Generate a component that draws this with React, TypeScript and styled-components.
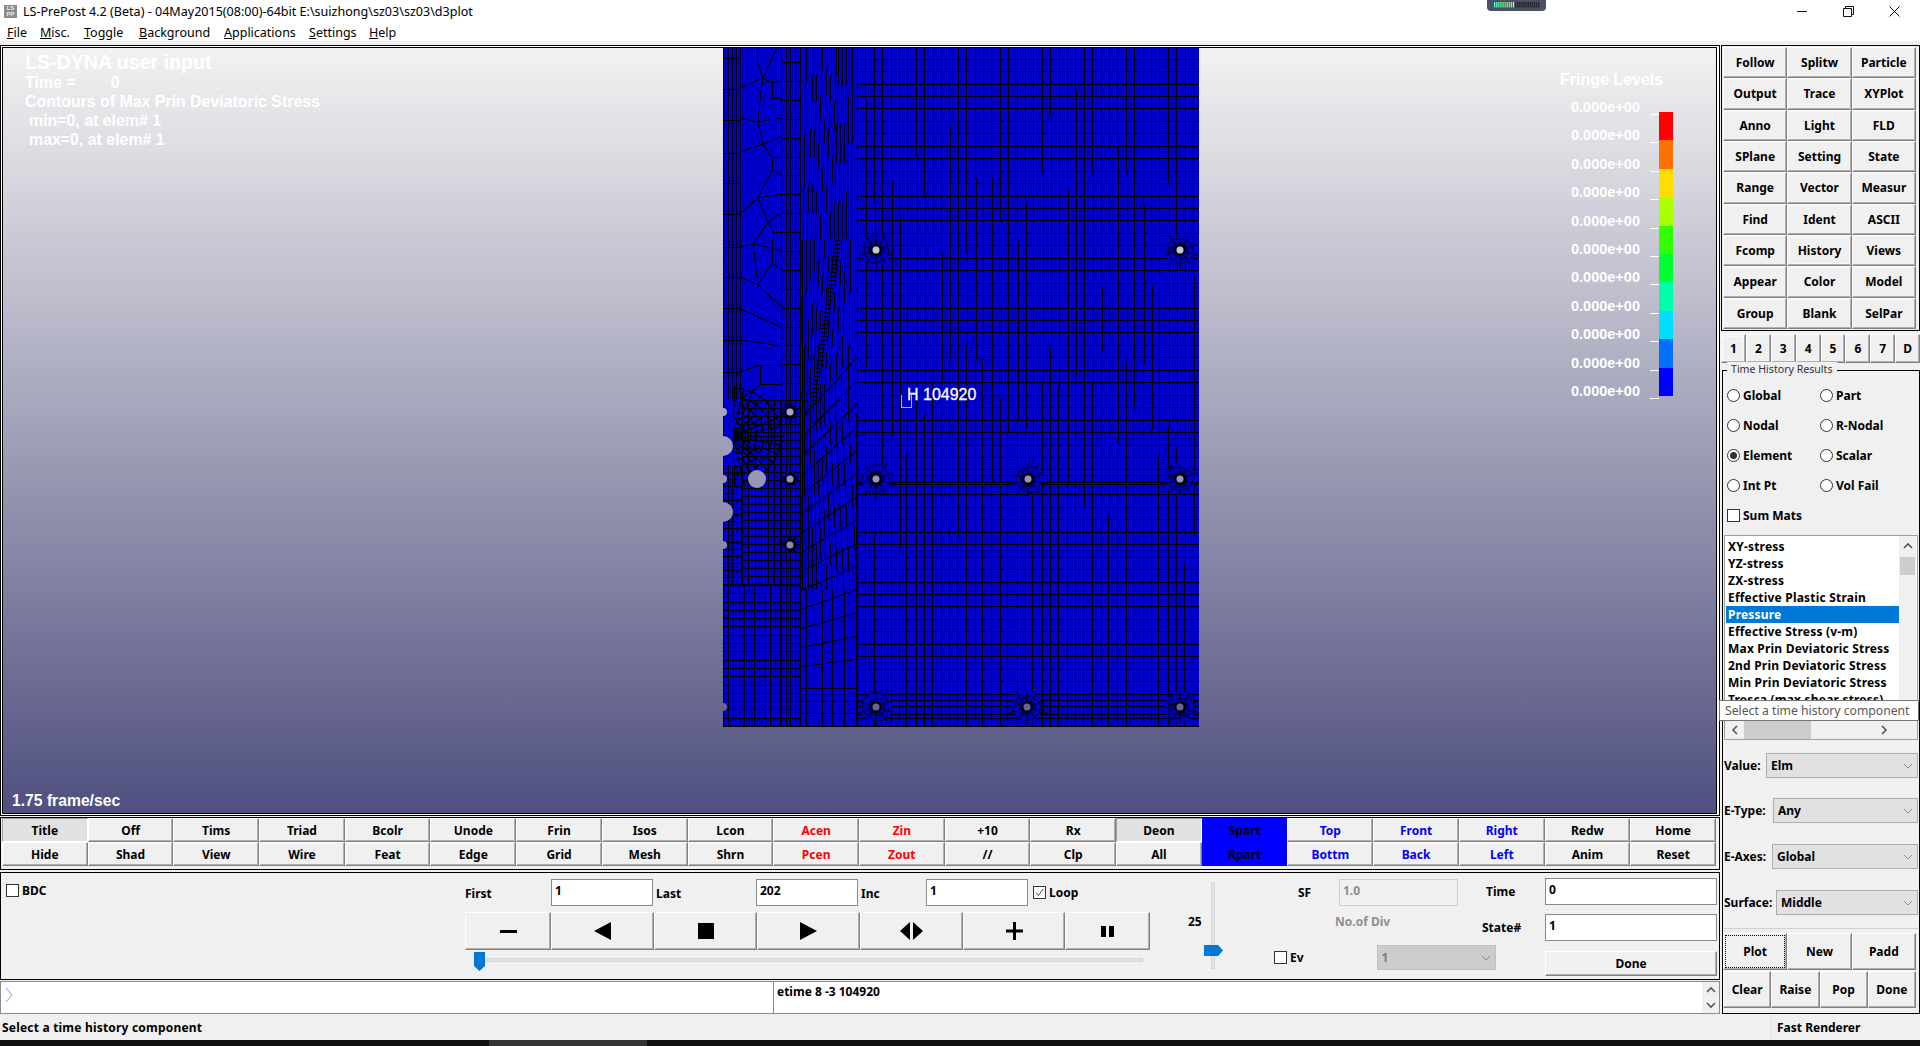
import styled, { createGlobalStyle } from "styled-components";

const GlobalStyle = createGlobalStyle`
  html, body {
    margin: 0;
    padding: 0;
    background: #f0f0f0;
  }
  * {
    box-sizing: border-box;
  }
`;

const UI_FONT = `"Noto Sans", "DejaVu Sans", sans-serif`;
const GL_FONT = `"Liberation Sans", Arial, sans-serif`;
const MESH_BLUE = "#0000c8";

// ---- mesh drawing helpers, coordinates are page pixels ----

const rnd = (i: number) => {
  const s = Math.sin(i * 12.9898) * 43758.5453;
  return s - Math.floor(s);
};

const backdrop = (y: number) => {
  const t = (y - 48) / 764;
  const mix = (a: number, b: number) => Math.round(a + (b - a) * t);
  return `rgb(${mix(242, 80)},${mix(242, 80)},${mix(242, 128)})`;
};

const hline = (x1: number, x2: number, y: number) => `M${x1} ${y}H${x2}`;
const vline = (x: number, y1: number, y2: number) => `M${x} ${y1}V${y2}`;
const poly = (pts: number[][]) =>
  "M" + pts.map((p) => `${p[0].toFixed(1)} ${p[1].toFixed(1)}`).join("L");

// traced from the upper left patch of the plate
const freeform: number[][][] = [
  [[757, 47], [758, 63], [763, 78], [772, 83], [781, 81]],
  [[777, 47], [763, 78], [761, 92], [758, 122], [763, 144], [772, 157], [781, 157]],
  [[740, 88], [763, 78]],
  [[772, 83], [772, 98], [781, 98]],
  [[740, 118], [758, 122], [781, 118]],
  [[740, 152], [763, 144], [781, 137]],
  [[772, 157], [772, 170], [781, 175]],
  [[772, 170], [758, 198], [740, 214]],
  [[758, 198], [781, 194]],
  [[758, 198], [768, 222], [781, 213]],
  [[768, 222], [774, 233], [781, 232]],
  [[774, 233], [772, 248], [781, 251]],
  [[772, 248], [773, 263], [781, 270]],
  [[773, 263], [767, 270], [758, 285], [740, 277]],
  [[758, 285], [781, 307]],
  [[740, 247], [753, 244], [772, 248]],
  [[753, 244], [758, 285]],
  [[768, 222], [753, 244]],
  [[740, 309], [781, 327]],
  [[740, 340], [781, 346]],
  [[740, 372], [760, 365], [781, 365]],
  [[760, 365], [760, 385], [781, 384]],
  [[740, 400], [760, 385]],
];

const fanKnots: number[][] = [
  [800.7, 806.7, 814, 818, 823, 828, 832, 837, 839, 843, 847, 850, 853, 857],
  [800, 803, 807, 811, 815, 820, 825, 830, 834, 838, 842, 846, 851, 857],
  [800, 802, 804, 807, 810, 813, 816, 820, 824, 829, 835, 841, 848, 857],
  [800, 803, 806, 809, 813, 817, 822, 827, 832, 838, 844, 850, 857, 857],
];
const fanYs = [48, 240, 400, 590];

function buildMesh() {
  const d: string[] = [];

  // right plate: rows 12.45 apart, columns about 8.4 apart with small jogs
  for (let y = 208 - 12.45 * 12; y < 727; y += 12.45) d.push(hline(857, 1199, Math.round(y)));
  d.push(hline(857, 1199, 475), hline(857, 1199, 484), hline(857, 1199, 700), hline(857, 1199, 714));
  for (let i = 0; i < 41; i++) {
    const x = Math.round(857 + i * 8.4);
    const jog = Math.round(90 + rnd(i + 1) * 200);
    const jog2 = Math.round(340 + rnd(i + 50) * 240);
    const offset = i % 3 === 0 ? 0 : 1;
    d.push(vline(x, 48, jog), vline(x + offset, jog, jog2), vline(x + offset - 1, jog2, 727));
  }

  // fan between the two plates
  fanKnots[0].forEach((_, i) => {
    const pts = fanYs.map((y, k) => [fanKnots[k][i], y]);
    if (i % 2 === 0 || i === 13) pts.push([fanKnots[3][i], 727]);
    d.push(poly(pts));
  });
  for (let y = 240; y < 405; y += 4) {
    const cx = 838 - (y - 240) * 0.15;
    d.push(hline(Math.round(cx - 3), Math.round(cx + 3), y));
  }
  for (let yl = 420; yl <= 680; yl += 19) {
    d.push(poly([[800, yl], [857, yl - (680 - yl) * 0.22 - 5]]));
  }
  for (let yr = 688; yr < 727; yr += 12.5) d.push(hline(800, 857, Math.round(yr)));

  // left strips
  [723, 728, 732, 736, 740].forEach((x) => d.push(vline(x, 48, 400)));
  [781, 786, 790, 795, 800].forEach((x) => d.push(vline(x, 48, 727)));
  [58, 89, 120, 153, 183, 214, 247, 277, 308, 340, 372].forEach((y) => d.push(hline(723, 740, y)));
  for (let y = 62; y < 400; y += 18.9) d.push(hline(781, 800, Math.round(y)));
  freeform.forEach((line) => d.push(poly(line)));

  // lower left block
  for (let x = 723; x < 781; x += 5.2) d.push(vline(Math.round(x), 585, 727));
  for (let y = 585; y < 727; y += 8.3) d.push(hline(723, 800, Math.round(y)));
  for (let x = 742; x < 781; x += 6.4) d.push(vline(Math.round(x), 400, 585));
  for (let y = 400; y < 585; y += 8) d.push(hline(742, 800, Math.round(y)));
  for (let x = 723; x < 742; x += 4.5) d.push(vline(Math.round(x), 465, 585));
  for (let y = 465; y < 585; y += 7) d.push(hline(723, 742, Math.round(y)));

  // spider web around the upper edge cut-out
  [8, 13, 18, 24, 31, 39, 48].forEach((r) => {
    const pts: number[][] = [];
    for (let a = -90; a <= 90; a += 12) {
      const rad = (a * Math.PI) / 180;
      pts.push([733 + r * Math.cos(rad), 436 + r * Math.sin(rad)]);
    }
    d.push(poly(pts));
  });
  for (let a = -88; a <= 88; a += 11) {
    const rad = (a * Math.PI) / 180;
    d.push(poly([[733, 436], [733 + 50 * Math.cos(rad), 436 + 50 * Math.sin(rad)]]));
  }
  d.push(hline(723, 1199, 726), vline(723, 48, 727));
  return d.join("");
}

const meshPath = buildMesh();

const bolts = [
  [876, 250], [1180, 250], [876, 479], [1028, 479], [1180, 479],
  [876, 707], [1027, 707], [1180, 707], [790, 412], [790, 479], [790, 545],
];
const cuts = [
  { x: 723, y: 446, r: 10 },
  { x: 723, y: 512, r: 10 },
  { x: 723, y: 412, r: 4 },
  { x: 723, y: 479, r: 4 },
  { x: 723, y: 545, r: 4 },
  { x: 723, y: 707, r: 4 },
  { x: 757, y: 479, r: 9 },
];

function Rosette({ x, y, seed }: { x: number; y: number; seed: number }) {
  const small = x < 800;
  const reach = small ? 9 : 18;
  const ring = (r: number, s: number) =>
    poly(
      Array.from({ length: 11 }, (_, i) => {
        const a = (i % 10) * (Math.PI / 5) + 0.3;
        const rr = r * (0.82 + rnd(s + (i % 10)) * 0.36);
        return [x + rr * Math.cos(a), y + rr * Math.sin(a)];
      })
    );
  const spokes = Array.from({ length: 10 }, (_, i) => {
    const a = i * (Math.PI / 5) + 0.3;
    const len = reach * (0.8 + rnd(seed + i) * 0.4);
    return `M${x} ${y}L${(x + len * Math.cos(a)).toFixed(1)} ${(y + len * Math.sin(a)).toFixed(1)}`;
  }).join("");
  return (
    <g fill="none" stroke="#000">
      <circle cx={x} cy={y} r={reach * 0.85} fill={MESH_BLUE} stroke="none" />
      <path d={spokes} strokeWidth={0.9} />
      <path d={ring(reach * 0.75, seed)} strokeWidth={0.8} />
      {!small && <path d={ring(reach * 0.47, seed + 20)} strokeWidth={0.8} />}
      <circle cx={x} cy={y} r={5} strokeWidth={2.4} />
      <circle cx={x} cy={y} r={3.5} fill={backdrop(y)} stroke="none" />
    </g>
  );
}

function Mesh() {
  return (
    <MeshSvg viewBox="723 48 476 679" width={476} height={679}>
      <rect x={723} y={48} width={476} height={679} fill={MESH_BLUE} />
      <path d={meshPath} fill="none" stroke="#000" strokeWidth={1} shapeRendering="crispEdges" />
      {bolts.map((b, i) => (
        <Rosette key={i} x={b[0]} y={b[1]} seed={i * 17 + 3} />
      ))}
      {cuts.map((c) => (
        <circle key={`${c.x}-${c.y}`} cx={c.x} cy={c.y} r={c.r} fill={backdrop(c.y)} />
      ))}
    </MeshSvg>
  );
}

// ---- page frame ----

const Page = styled.div`
  width: 1920px;
  height: 1046px;
  overflow: hidden;
  display: flex;
  flex-direction: column;
  background: #f0f0f0;
  font-family: ${UI_FONT};
  color: #000;
`;

const TitleBar = styled.div`
  height: 22px;
  background: #fff;
  display: flex;
  align-items: center;
  position: relative;
  font-size: 12.55px;
  padding-left: 4px;
`;

const AppIcon = styled.span`
  width: 13px;
  height: 13px;
  margin-right: 6px;
  background: #8b8b8b;
  color: #eee;
  font: bold 6px/6px ${GL_FONT};
  display: flex;
  flex-wrap: wrap;
  align-items: center;
  justify-content: center;
  text-align: center;
`;

const TitleText = styled.span`
  flex: 1;
  white-space: nowrap;
`;

const MonitorTab = styled.svg`
  position: absolute;
  left: 1487px;
  top: 0;
`;

const WindowControls = styled.div`
  display: flex;
  align-items: center;
  gap: 35px;
  padding-right: 20px;
`;

const MenuBar = styled.div`
  height: 19px;
  background: #fff;
  display: flex;
  align-items: center;
  font-size: 12.5px;
  padding: 2px 0 0 7px;
`;

const MenuItem = styled.span<{ $width: number }>`
  width: ${(p) => p.$width}px;
  white-space: nowrap;
  &::first-letter {
    text-decoration: underline;
  }
`;

const Body = styled.div`
  height: 974px;
  display: flex;
  padding-top: 4px;
`;

const LeftColumn = styled.div`
  width: 1720px;
  display: flex;
  flex-direction: column;
`;

const ViewFrame = styled.div`
  height: 771px;
  border: 1px solid #000;
  padding: 1px 2px 1px 1px;
  background: #fff;
`;

const Viewport = styled.div`
  position: relative;
  height: 100%;
  border: 1px solid #000;
  background: linear-gradient(#f2f2f2, #505080);
  overflow: hidden;
  font-family: ${GL_FONT};
  font-weight: 700;
  color: #fff;
`;

const MeshSvg = styled.svg`
  position: absolute;
  left: 720px;
  top: 0;
`;

const InfoBlock = styled.div`
  position: absolute;
  left: 22px;
  top: 3px;
  font-size: 15.9px;
  line-height: 19px;
  white-space: pre;
`;

const InfoTitle = styled.div`
  font-size: 19.6px;
  line-height: 22px;
`;

const Indented = styled.div`
  padding-left: 4px;
`;

const Legend = styled.div`
  position: absolute;
  left: 1557px;
  top: 22px;
`;

const LegendTitle = styled.div`
  font-size: 16px;
  line-height: 20px;
`;

const LegendBody = styled.div`
  display: flex;
  margin-top: 22px;
  margin-left: 11px;
`;

const LegendLabels = styled.div`
  width: 88px;
  display: flex;
  flex-direction: column;
  margin-top: -13px;
`;

const LegendRow = styled.div`
  height: 28.4px;
  display: flex;
  font-size: 14.5px;
  line-height: 17px;
  position: relative;
  &::after {
    content: "";
    position: absolute;
    left: 79px;
    top: 15px;
    width: 9px;
    height: 1px;
    background: #fff;
  }
`;

const ColorBar = styled.div`
  width: 14px;
  display: flex;
  flex-direction: column;
`;

const ColorCell = styled.div<{ $color: string }>`
  height: 28.4px;
  background: ${(p) => p.$color};
`;

const FrameRate = styled.div`
  position: absolute;
  left: 9px;
  bottom: 3px;
  font-size: 15.7px;
  line-height: 18px;
`;

const NodeLabel = styled.div`
  position: absolute;
  left: 904px;
  top: 338px;
  font-size: 16px;
  line-height: 18px;
  font-weight: 400;
  -webkit-text-stroke: 0.3px #fff;
  white-space: nowrap;
  &::before {
    content: "";
    position: absolute;
    left: -6px;
    top: 9px;
    width: 9px;
    height: 12px;
    border: 1px solid #2ee;
    border-top: none;
  }
`;

// ---- buttons ----

const Btn = styled.button<{ $color?: string; $bg?: string; $pressed?: boolean; $focus?: string }>`
  min-width: 0;
  padding: 0;
  margin: 0;
  font-family: ${UI_FONT};
  font-size: 12px;
  font-weight: 700;
  color: ${(p) => p.$color || "#000"};
  background: ${(p) => p.$bg || (p.$pressed ? "#e1e1e1" : "#f0f0f0")};
  border: 1px solid;
  border-color: ${(p) => (p.$bg ? p.$bg : p.$pressed ? "#a0a0a0 #fff #fff #a0a0a0" : "#fff #808080 #808080 #fff")};
  box-shadow: ${(p) => (p.$bg || p.$pressed ? "none" : "inset -1px -1px 0 #b0b0b0")};
  outline: ${(p) => (p.$focus ? `1px dotted ${p.$focus}` : "none")};
  outline-offset: -3px;
`;

const StripFrame = styled.div`
  height: 53px;
  margin-top: 1px;
  border: 1px solid #000;
  padding: 0 3px 3px 1px;
  display: grid;
  grid-template-columns: repeat(20, 1fr);
  grid-template-rows: repeat(2, 1fr);
  width: 1720px;
`;

const Panel = styled.div`
  height: 108px;
  margin-top: 2px;
  border: 1px solid #000;
  display: flex;
  font-size: 12px;
  font-weight: 700;
`;

const BdcColumn = styled.div`
  width: 464px;
  padding: 9px 0 0 5px;
`;

const CheckLabel = styled.label`
  display: flex;
  align-items: center;
  gap: 3px;
  white-space: nowrap;
`;

const LoopCheck = styled(CheckLabel)`
  margin-left: 5px;
`;

const CheckBox = styled.span`
  width: 13px;
  height: 13px;
  background: #fff;
  border: 1px solid #333;
  display: inline-flex;
  align-items: center;
  justify-content: center;
  flex: none;
`;

const PlayerColumn = styled.div`
  width: 686px;
  display: flex;
  flex-direction: column;
  padding-top: 6px;
`;

const FieldRow = styled.div`
  height: 27px;
  display: flex;
  align-items: center;
`;

const FieldLabel = styled.span<{ $width: number }>`
  width: ${(p) => p.$width}px;
  padding-top: 1px;
`;

const TextBox = styled.div<{ $width?: number; $disabled?: boolean }>`
  width: ${(p) => (p.$width ? `${p.$width}px` : "100%")};
  height: 27px;
  background: ${(p) => (p.$disabled ? "#f0f0f0" : "#fff")};
  border: 1px solid ${(p) => (p.$disabled ? "#d0d0d0" : "#8a8a8a")};
  padding: 2px 3px 0;
  font-size: 12px;
  line-height: 17px;
  font-weight: 700;
  color: ${(p) => (p.$disabled ? "#8d8d8d" : "#000")};
`;

const TransportRow = styled.div`
  display: flex;
  height: 38px;
  margin-top: 6px;
`;

const TransportBtn = styled(Btn)<{ $width: number }>`
  width: ${(p) => p.$width}px;
  display: flex;
  align-items: center;
  justify-content: center;
`;

const HSlider = styled.div`
  position: relative;
  height: 4px;
  margin: 8px 8px 0 19px;
  background: #e0e3e3;
  border: 1px solid #d6d6d6;
`;

const HThumb = styled.svg`
  position: absolute;
  left: -11px;
  top: -7px;
`;

const SpeedColumn = styled.div`
  width: 122px;
  display: flex;
  padding: 6px 0 0 37px;
`;

const SpeedValue = styled.span`
  margin-top: 34px;
  width: 23px;
`;

const VSlider = styled.div`
  position: relative;
  width: 4px;
  height: 87px;
  margin-top: 3px;
  background: #e4e4e4;
  border: 1px solid #d6d6d6;
`;

const VThumb = styled.svg`
  position: absolute;
  left: -8px;
  top: 62px;
`;

const SfColumn = styled.div`
  width: 209px;
  padding-top: 6px;
  display: flex;
  flex-direction: column;
`;

const SfRow = styled.div`
  display: flex;
  align-items: center;
  height: 27px;
  padding-left: 25px;
`;

const SfLabel = styled.span`
  width: 41px;
`;

const GreyText = styled.div`
  color: #8e8e8e;
  padding-left: 62px;
  margin-top: 8px;
  line-height: 16px;
`;

const SfBottomRow = styled.div`
  display: flex;
  align-items: center;
  margin-top: 15px;
  padding-left: 1px;
`;

const EvSpacer = styled.div`
  flex: none;
  width: 73px;
`;

const TimeColumn = styled.div`
  flex: 1;
  padding: 5px 2px 0 0;
  display: grid;
  grid-template-columns: 63px 1fr;
  grid-auto-rows: 27px;
  row-gap: 9px;
  align-items: center;
`;

const TimeLabel = styled.span<{ $indent: number }>`
  padding-left: ${(p) => p.$indent}px;
`;

const DoneBtn = styled(Btn)`
  height: 25px;
`;

const DropBox = styled.div<{ $disabled?: boolean; $width?: number; $height: number }>`
  width: ${(p) => (p.$width ? `${p.$width}px` : "auto")};
  flex: ${(p) => (p.$width ? "none" : 1)};
  height: ${(p) => p.$height}px;
  background: ${(p) => (p.$disabled ? "#cccccc" : "#e1e1e1")};
  border: 1px solid ${(p) => (p.$disabled ? "#c0c0c0" : "#adadad")};
  color: ${(p) => (p.$disabled ? "#7d7d7d" : "#000")};
  display: flex;
  align-items: center;
  justify-content: space-between;
  padding: 0 4px;
  font-weight: 700;
  font-size: 12px;
`;

const Command = styled.div`
  height: 33px;
  margin-top: 1px;
  background: #fff;
  border: 1px solid #8a8a8a;
  display: flex;
  font-size: 12px;
  font-weight: 700;
`;

const PromptCell = styled.div`
  width: 773px;
  border-right: 1px solid #8a8a8a;
  padding: 5px 0 0 4px;
`;

const HistoryCell = styled.div`
  flex: 1;
  padding: 1px 0 0 3px;
`;

const CommandScroll = styled.div`
  width: 17px;
  background: #f0f0f0;
  display: flex;
  flex-direction: column;
  align-items: center;
  justify-content: space-around;
`;

const Status = styled.div`
  height: 25px;
  display: flex;
  align-items: center;
  font-size: 12px;
  font-weight: 700;
  letter-spacing: 0.2px;
  padding-left: 2px;
`;

const StatusMessage = styled.span`
  width: 1769px;
`;

const StatusRight = styled.span`
  padding-left: 5px;
  border-left: 1px solid #e4e4e4;
  height: 100%;
  display: flex;
  align-items: center;
  letter-spacing: 0;
`;

const DarkStrip = styled.div`
  flex: 1;
  background: #120f10;
  display: flex;
  padding-left: 489px;
`;

const DarkSegment = styled.div`
  width: 158px;
  background: #353233;
`;

// ---- right side ----

const RightPanel = styled.div`
  width: 199px;
  margin-left: 1px;
  display: flex;
  flex-direction: column;
  font-size: 12px;
  font-weight: 700;
`;

const CommandGrid = styled.div`
  height: 286px;
  border: 1px solid #000;
  padding: 1px 3px 1px 1px;
  display: grid;
  grid-template-columns: repeat(3, 1fr);
  grid-template-rows: repeat(9, 1fr);
`;

const Tabs = styled.div`
  display: grid;
  grid-template-columns: repeat(8, 1fr);
  height: 29px;
  margin-top: 3px;
`;

const GroupBox = styled.div`
  position: relative;
  height: 644px;
  margin-top: 7px;
  margin-left: 1px;
  border: 1px solid #000;
  display: flex;
  flex-direction: column;
`;

const GroupTitle = styled.span`
  position: absolute;
  left: 4px;
  top: -9px;
  padding: 0 4px;
  background: #f0f0f0;
  font-weight: 400;
  font-size: 10.6px;
  line-height: 15px;
  color: #333;
`;

const RadioGrid = styled.div`
  display: grid;
  grid-template-columns: 93px 1fr;
  grid-auto-rows: 30px;
  padding: 9px 0 0 4px;
  align-items: center;
`;

const RadioLabel = styled.label`
  display: flex;
  align-items: center;
  gap: 3px;
`;

const Radio = styled.span<{ $on?: boolean }>`
  width: 13px;
  height: 13px;
  border-radius: 50%;
  background: #fff;
  border: 1px solid #333;
  display: inline-flex;
  align-items: center;
  justify-content: center;
  flex: none;
  &::after {
    content: "";
    width: 7px;
    height: 7px;
    border-radius: 50%;
    background: ${(p) => (p.$on ? "#333" : "transparent")};
  }
`;

const SumRow = styled.div`
  grid-column: 1 / 3;
`;

const ListWrap = styled.div`
  position: relative;
  margin: 5px 1px 0 1px;
  height: 205px;
  background: #fff;
  border: 1px solid #a0a0a0;
  display: flex;
  flex-direction: column;
`;

const ListMain = styled.div`
  flex: 1;
  display: flex;
  overflow: hidden;
`;

const ListItems = styled.div`
  flex: 1;
  padding: 2px 0 0 1px;
  overflow: hidden;
`;

const ListItem = styled.div<{ $selected?: boolean }>`
  height: 17px;
  line-height: 17px;
  padding-left: 2px;
  letter-spacing: 0.2px;
  white-space: nowrap;
  background: ${(p) => (p.$selected ? "#0078d7" : "transparent")};
  color: ${(p) => (p.$selected ? "#fff" : "#000")};
`;

const VScroll = styled.div`
  width: 17px;
  margin-right: 1px;
  background: #f0f0f0;
  display: flex;
  flex-direction: column;
  align-items: center;
  padding-top: 5px;
`;

const VScrollThumb = styled.div`
  width: 15px;
  height: 18px;
  margin-top: 6px;
  background: #cdcdcd;
`;

const HScroll = styled.div`
  height: 18px;
  background: #f0f0f0;
  display: flex;
  align-items: center;
`;

const HScrollThumb = styled.div`
  width: 67px;
  height: 100%;
  background: #cdcdcd;
  margin: 0 68px 0 4px;
`;

const ArrowSlot = styled.span<{ $left: number }>`
  margin-left: ${(p) => p.$left}px;
  display: flex;
`;

const ToolTip = styled.div`
  position: absolute;
  left: -6px;
  top: 164px;
  width: 200px;
  height: 21px;
  background: #fff;
  border: 1px solid #767676;
  padding-left: 5px;
  font-weight: 400;
  font-size: 12.2px;
  line-height: 19px;
  color: #575757;
  white-space: nowrap;
  z-index: 2;
`;

const SelectRow = styled.div<{ $labelWidth: number; $top: number }>`
  display: grid;
  grid-template-columns: ${(p) => p.$labelWidth}px 1fr;
  align-items: center;
  margin: ${(p) => p.$top}px 1px 0 0;
  padding-left: 1px;
  white-space: nowrap;
`;

const Separator = styled.div`
  height: 1px;
  margin: 13px 1px 0 1px;
  background: #cfcfcf;
`;

const ActionRow = styled.div<{ $cols: number; $top: number }>`
  display: grid;
  grid-template-columns: repeat(${(p) => p.$cols}, 1fr);
  height: 37px;
  margin: ${(p) => p.$top}px 3px 0 0;
`;

const ROW_ONE = ["Title", "Off", "Tims", "Triad", "Bcolr", "Unode", "Frin", "Isos", "Lcon", "Acen", "Zin", "+10", "Rx", "Deon", "Spart", "Top", "Front", "Right", "Redw", "Home"];
const ROW_TWO = ["Hide", "Shad", "View", "Wire", "Feat", "Edge", "Grid", "Mesh", "Shrn", "Pcen", "Zout", "//", "Clp", "All", "Rpart", "Bottm", "Back", "Left", "Anim", "Reset"];
const RED = ["Acen", "Zin", "Pcen", "Zout"];
const BLUE = ["Top", "Front", "Right", "Bottm", "Back", "Left"];

const COMMANDS = [
  "Follow", "Splitw", "Particle", "Output", "Trace", "XYPlot", "Anno", "Light", "FLD",
  "SPlane", "Setting", "State", "Range", "Vector", "Measur", "Find", "Ident", "ASCII",
  "Fcomp", "History", "Views", "Appear", "Color", "Model", "Group", "Blank", "SelPar",
];

const RADIOS = [
  ["Global", "Part"],
  ["Nodal", "R-Nodal"],
  ["Element", "Scalar"],
  ["Int Pt", "Vol Fail"],
];

const RESULTS = [
  "XY-stress", "YZ-stress", "ZX-stress", "Effective Plastic Strain", "Pressure",
  "Effective Stress (v-m)", "Max Prin Deviatoric Stress", "2nd Prin Deviatoric Stress",
  "Min Prin Deviatoric Stress", "Tresca (max shear stress)",
];

const FRINGE = ["#ff0000", "#ff7000", "#ffdd00", "#aaff00", "#33ff00", "#00ff33", "#00ffaa", "#00ddff", "#0070ff", "#0000ff"];

const SELECTS = [
  { label: "Value:", value: "Elm", width: 42, top: 13 },
  { label: "E-Type:", value: "Any", width: 49, top: 20 },
  { label: "E-Axes:", value: "Global", width: 48, top: 21 },
  { label: "Surface:", value: "Middle", width: 52, top: 21 },
];

function Chevron({ dir, color = "#555" }: { dir: "up" | "down" | "left" | "right"; color?: string }) {
  const pts = {
    up: "1,7 5,3 9,7",
    down: "1,3 5,7 9,3",
    left: "7,1 3,5 7,9",
    right: "3,1 7,5 3,9",
  }[dir];
  return (
    <svg width="10" height="10" viewBox="0 0 10 10">
      <polyline points={pts} fill="none" stroke={color} strokeWidth={dir === "down" && color === "#8c8c8c" ? 1 : 1.6} />
    </svg>
  );
}

function stripBtn(label: string) {
  const color = RED.includes(label) ? "#ff0000" : BLUE.includes(label) ? "#0000ff" : undefined;
  const bg = label === "Spart" || label === "Rpart" ? "#0000ff" : undefined;
  const pressed = label === "Title" || label === "Deon";
  return (
    <Btn key={label} $color={color} $bg={bg} $pressed={pressed}>
      {label}
    </Btn>
  );
}

export default function App() {
  return (
    <Page>
      <GlobalStyle />
      <TitleBar>
        <AppIcon>LS PP</AppIcon>
        <TitleText>LS-PrePost 4.2 (Beta) - 04May2015(08:00)-64bit E:\suizhong\sz03\sz03\d3plot</TitleText>
        <MonitorTab width="59" height="11" viewBox="0 0 59 11">
          <path d="M0 0H59V7Q59 11 55 11H4Q0 11 0 7Z" fill="#4b5062" />
          {Array.from({ length: 22 }, (_, i) => (
            <rect
              key={i}
              x={7 + i * 2.1}
              y={2}
              width={1.3}
              height={5.5}
              fill={i < 10 ? `hsl(${170 - i * 10},85%,65%)` : "#23262e"}
            />
          ))}
        </MonitorTab>
        <WindowControls>
          <svg width="11" height="11" viewBox="0 0 11 11">
            <path d="M0 5.5H10" stroke="#111" fill="none" />
          </svg>
          <svg width="11" height="11" viewBox="0 0 11 11">
            <path d="M.5 2.5H8.5V10.5H.5ZM2.5 2.5V.5H10.5V8.5H8.5" stroke="#111" fill="none" />
          </svg>
          <svg width="11" height="11" viewBox="0 0 11 11">
            <path d="M.5 .5L10.5 10.5M10.5 .5L.5 10.5" stroke="#111" fill="none" />
          </svg>
        </WindowControls>
      </TitleBar>
      <MenuBar>
        <MenuItem $width={33}>File</MenuItem>
        <MenuItem $width={44}>Misc.</MenuItem>
        <MenuItem $width={55}>Toggle</MenuItem>
        <MenuItem $width={85}>Background</MenuItem>
        <MenuItem $width={85}>Applications</MenuItem>
        <MenuItem $width={60}>Settings</MenuItem>
        <MenuItem $width={40}>Help</MenuItem>
      </MenuBar>
      <Body>
        <LeftColumn>
          <ViewFrame>
            <Viewport>
              <Mesh />
              <InfoBlock>
                <InfoTitle>LS-DYNA user input</InfoTitle>
                <div>{"Time =        0"}</div>
                <div>Contours of Max Prin Deviatoric Stress</div>
                <Indented>min=0, at elem# 1</Indented>
                <Indented>max=0, at elem# 1</Indented>
              </InfoBlock>
              <Legend>
                <LegendTitle>Fringe Levels</LegendTitle>
                <LegendBody>
                  <LegendLabels>
                    {Array.from({ length: 11 }, (_, i) => (
                      <LegendRow key={i}>0.000e+00</LegendRow>
                    ))}
                  </LegendLabels>
                  <ColorBar>
                    {FRINGE.map((c) => (
                      <ColorCell key={c} $color={c} />
                    ))}
                  </ColorBar>
                </LegendBody>
              </Legend>
              <NodeLabel>H 104920</NodeLabel>
              <FrameRate>1.75 frame/sec</FrameRate>
            </Viewport>
          </ViewFrame>
          <StripFrame>
            {ROW_ONE.map(stripBtn)}
            {ROW_TWO.map(stripBtn)}
          </StripFrame>
          <Panel>
            <BdcColumn>
              <CheckLabel>
                <CheckBox />
                BDC
              </CheckLabel>
            </BdcColumn>
            <PlayerColumn>
              <FieldRow>
                <FieldLabel $width={86}>First</FieldLabel>
                <TextBox $width={102}>1</TextBox>
                <FieldLabel $width={103}>&nbsp;Last</FieldLabel>
                <TextBox $width={102}>202</TextBox>
                <FieldLabel $width={68}>&nbsp;Inc</FieldLabel>
                <TextBox $width={102}>1</TextBox>
                <LoopCheck>
                  <CheckBox>
                    <svg width="9" height="9" viewBox="0 0 9 9">
                      <path d="M1 4.5L3.5 7.5L8 1" fill="none" stroke="#444" />
                    </svg>
                  </CheckBox>
                  Loop
                </LoopCheck>
              </FieldRow>
              <TransportRow>
                <TransportBtn $width={86}>
                  <svg width="17" height="3">
                    <rect width="17" height="3" />
                  </svg>
                </TransportBtn>
                <TransportBtn $width={103}>
                  <svg width="17" height="18" viewBox="0 0 17 18">
                    <path d="M0 9L17 0V18Z" />
                  </svg>
                </TransportBtn>
                <TransportBtn $width={103}>
                  <svg width="16" height="16">
                    <rect width="16" height="16" />
                  </svg>
                </TransportBtn>
                <TransportBtn $width={103}>
                  <svg width="17" height="18" viewBox="0 0 17 18">
                    <path d="M17 9L0 0V18Z" />
                  </svg>
                </TransportBtn>
                <TransportBtn $width={103}>
                  <svg width="23" height="18" viewBox="0 0 23 18">
                    <path d="M0 9L10 0V18ZM23 9L13 0V18Z" />
                  </svg>
                </TransportBtn>
                <TransportBtn $width={102}>
                  <svg width="17" height="18" viewBox="0 0 17 18">
                    <path d="M7 0H10V7.5H17V10.5H10V18H7V10.5H0V7.5H7Z" />
                  </svg>
                </TransportBtn>
                <TransportBtn $width={85}>
                  <svg width="13" height="11" viewBox="0 0 13 11">
                    <path d="M0 0H5V11H0ZM8 0H13V11H8Z" />
                  </svg>
                </TransportBtn>
              </TransportRow>
              <HSlider>
                <HThumb width="11" height="19" viewBox="0 0 11 19">
                  <path d="M0 0H11V14L5.5 19L0 14Z" fill="#0078d7" />
                </HThumb>
              </HSlider>
            </PlayerColumn>
            <SpeedColumn>
              <SpeedValue>25</SpeedValue>
              <VSlider>
                <VThumb width="19" height="11" viewBox="0 0 19 11">
                  <path d="M0 0H14L19 5.5L14 11H0Z" fill="#0078d7" />
                </VThumb>
              </VSlider>
            </SpeedColumn>
            <SfColumn>
              <SfRow>
                <SfLabel>SF</SfLabel>
                <TextBox $width={119} $disabled>
                  1.0
                </TextBox>
              </SfRow>
              <GreyText>No.of Div</GreyText>
              <SfBottomRow>
                <CheckLabel>
                  <CheckBox />
                  Ev
                </CheckLabel>
                <EvSpacer />
                <DropBox $disabled $width={119} $height={25}>
                  1
                  <Chevron dir="down" color="#8c8c8c" />
                </DropBox>
              </SfBottomRow>
            </SfColumn>
            <TimeColumn>
              <TimeLabel $indent={4}>Time</TimeLabel>
              <TextBox>0</TextBox>
              <TimeLabel $indent={0}>State#</TimeLabel>
              <TextBox>1</TextBox>
              <span />
              <DoneBtn>Done</DoneBtn>
            </TimeColumn>
          </Panel>
          <Command>
            <PromptCell>
              <svg width="8" height="16" viewBox="0 0 8 16">
                <polyline points="1,1 7,8 1,15" fill="none" stroke="#8a8aff" />
              </svg>
            </PromptCell>
            <HistoryCell>etime 8 -3 104920</HistoryCell>
            <CommandScroll>
              <Chevron dir="up" />
              <Chevron dir="down" />
            </CommandScroll>
          </Command>
        </LeftColumn>
        <RightPanel>
          <CommandGrid>
            {COMMANDS.map((c) => (
              <Btn key={c} $focus={c === "History" ? "#fff" : undefined}>
                {c}
              </Btn>
            ))}
          </CommandGrid>
          <Tabs>
            {["1", "2", "3", "4", "5", "6", "7", "D"].map((t) => (
              <Btn key={t} $focus={t === "1" ? "#fff" : undefined}>
                {t}
              </Btn>
            ))}
          </Tabs>
          <GroupBox>
            <GroupTitle>Time History Results</GroupTitle>
            <RadioGrid>
              {RADIOS.flat().map((r) => (
                <RadioLabel key={r}>
                  <Radio $on={r === "Element"} />
                  {r}
                </RadioLabel>
              ))}
              <SumRow>
                <CheckLabel>
                  <CheckBox />
                  Sum Mats
                </CheckLabel>
              </SumRow>
            </RadioGrid>
            <ListWrap>
              <ListMain>
                <ListItems>
                  {RESULTS.map((r) => (
                    <ListItem key={r} $selected={r === "Pressure"}>
                      {r}
                    </ListItem>
                  ))}
                </ListItems>
                <VScroll>
                  <Chevron dir="up" />
                  <VScrollThumb />
                </VScroll>
              </ListMain>
              <HScroll>
                <ArrowSlot $left={5}>
                  <Chevron dir="left" />
                </ArrowSlot>
                <HScrollThumb />
                <ArrowSlot $left={0}>
                  <Chevron dir="right" />
                </ArrowSlot>
              </HScroll>
              <ToolTip>Select a time history component</ToolTip>
            </ListWrap>
            {SELECTS.map((s) => (
              <SelectRow key={s.label} $labelWidth={s.width} $top={s.top}>
                {s.label}
                <DropBox $height={25}>
                  {s.value}
                  <Chevron dir="down" color="#8c8c8c" />
                </DropBox>
              </SelectRow>
            ))}
            <Separator />
            <ActionRow $cols={3} $top={4}>
              <Btn $focus="#000">Plot</Btn>
              <Btn>New</Btn>
              <Btn>Padd</Btn>
            </ActionRow>
            <ActionRow $cols={4} $top={1}>
              <Btn>Clear</Btn>
              <Btn>Raise</Btn>
              <Btn>Pop</Btn>
              <Btn>Done</Btn>
            </ActionRow>
          </GroupBox>
        </RightPanel>
      </Body>
      <Status>
        <StatusMessage>Select a time history component</StatusMessage>
        <StatusRight>Fast Renderer</StatusRight>
      </Status>
      <DarkStrip>
        <DarkSegment />
      </DarkStrip>
    </Page>
  );
}
